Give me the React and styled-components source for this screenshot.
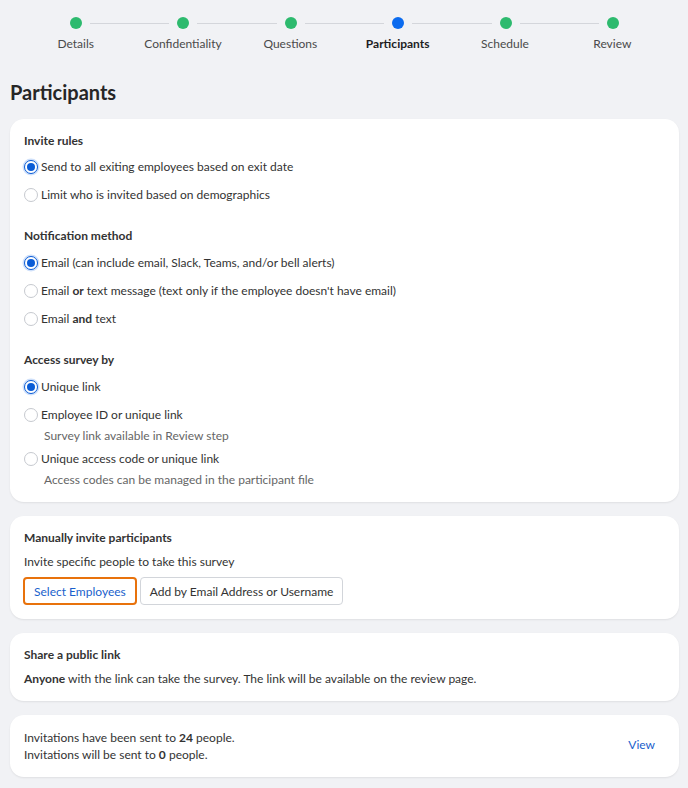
import React from 'react';
import styled, { createGlobalStyle } from 'styled-components';

const GlobalStyle = createGlobalStyle`
  html, body {
    margin: 0;
    padding: 0;
    background: #f1f2f5;
    font-family: Lato, "Liberation Sans", sans-serif;
    color: #333;
  }
`;

const Page = styled.div`
  padding: 0 9px 10px 10px;
`;

const Stepper = styled.div`
  padding-top: 17px;
  margin-left: 12px;
  width: 644px;
`;

const DotRow = styled.div`
  display: flex;
  align-items: center;
  padding: 0 47px 0 48px;
`;

const Dot = styled.div`
  width: 12px;
  height: 12px;
  border-radius: 50%;
  background: ${p => (p.$active ? '#0b6bef' : '#2dba6e')};
  flex: none;
`;

const Connector = styled.div`
  flex: 1;
  height: 1px;
  margin: 0 8px;
  background: #d4d6db;
`;

const Labels = styled.div`
  display: grid;
  grid-template-columns: repeat(6, 1fr);
  margin-top: 7px;
`;

const StepLabel = styled.div`
  text-align: center;
  font-size: 12px;
  color: ${p => (p.$active ? '#1d1d1f' : '#4a4a4a')};
  font-weight: ${p => (p.$active ? 700 : 400)};
`;

const Title = styled.h1`
  margin: 29px 0 0;
  font-size: 20px;
  font-weight: 700;
  color: #262626;
  line-height: 24px;
`;

const Card = styled.div`
  background: #fff;
  border-radius: 14px;
  box-shadow: 0 1px 2px rgba(0, 0, 0, 0.08);
  padding: ${p => p.$pad || '14px'};
  margin-top: ${p => p.$mt || '14px'};
  display: ${p => (p.$row ? 'flex' : 'block')};
  align-items: center;
  justify-content: space-between;
`;

const Section = styled.div`
  & + & {
    margin-top: 25px;
  }
`;

const SectionTitle = styled.div`
  font-size: 12px;
  font-weight: 700;
  color: #333;
  line-height: 16px;
  margin-bottom: ${p => p.$mb || '11px'};
`;

const Option = styled.label`
  display: flex;
  align-items: center;
  gap: 3px;
  font-size: 12px;
  color: #333;
  line-height: 16px;
  & + & {
    margin-top: 12px;
  }
`;

const Radio = styled.span`
  width: 14px;
  height: 14px;
  box-sizing: border-box;
  border-radius: 50%;
  flex: none;
  border: 1px solid ${p => (p.$checked ? '#0a5cd6' : '#c6c9cf')};
  background: #fff;
  display: flex;
  align-items: center;
  justify-content: center;
  box-shadow: ${p => (p.$checked ? '0 0 0 1.5px #cfe0fa' : 'none')};
  &::after {
    content: '';
    width: 8px;
    height: 8px;
    border-radius: 50%;
    background: ${p => (p.$checked ? '#0a5cd6' : 'transparent')};
  }
`;

const Help = styled.div`
  font-size: 12px;
  color: #666;
  line-height: 16px;
  padding-left: 20px;
  margin-top: 5px;
  & + ${Option} {
    margin-top: 7px;
  }
`;

const Text = styled.div`
  font-size: 12px;
  color: #333;
  line-height: 17px;
`;

const Buttons = styled.div`
  display: flex;
  gap: 3px;
  margin-top: 7px;
  margin-left: -1px;
`;

const Button = styled.button`
  font-family: inherit;
  font-size: 12px;
  height: 28px;
  padding: 0 9px;
  border-radius: 4px;
  background: #fff;
  cursor: pointer;
  color: ${p => (p.$primary ? '#1a5fcc' : '#333')};
  border: ${p => (p.$focus ? '2px solid #e8720c' : '1px solid #d2d5da')};
`;

const Link = styled.a`
  font-size: 12px;
  color: #1a5fcc;
  margin: 0 24px 4px 0;
`;

const steps = ['Details', 'Confidentiality', 'Questions', 'Participants', 'Schedule', 'Review'];

function RadioOption({ checked, children }) {
  return (
    <Option>
      <Radio $checked={checked} />
      <span>{children}</span>
    </Option>
  );
}

export default function App() {
  return (
    <Page>
      <GlobalStyle />
      <Stepper>
        <DotRow>
          {steps.map((s, i) => (
            <React.Fragment key={s}>
              {i > 0 && <Connector />}
              <Dot $active={i === 3} />
            </React.Fragment>
          ))}
        </DotRow>
        <Labels>
          {steps.map((s, i) => (
            <StepLabel key={s} $active={i === 3}>{s}</StepLabel>
          ))}
        </Labels>
      </Stepper>

      <Title>Participants</Title>

      <Card $mt="15px">
        <Section>
          <SectionTitle $mb="10px">Invite rules</SectionTitle>
          <RadioOption checked>Send to all exiting employees based on exit date</RadioOption>
          <RadioOption>Limit who is invited based on demographics</RadioOption>
        </Section>
        <Section>
          <SectionTitle>Notification method</SectionTitle>
          <RadioOption checked>Email (can include email, Slack, Teams, and/or bell alerts)</RadioOption>
          <RadioOption>Email <b>or</b> text message (text only if the employee doesn't have email)</RadioOption>
          <RadioOption>Email <b>and</b> text</RadioOption>
        </Section>
        <Section>
          <SectionTitle>Access survey by</SectionTitle>
          <RadioOption checked>Unique link</RadioOption>
          <RadioOption>Employee ID or unique link</RadioOption>
          <Help>Survey link available in Review step</Help>
          <RadioOption>Unique access code or unique link</RadioOption>
          <Help>Access codes can be managed in the participant file</Help>
        </Section>
      </Card>

      <Card>
        <SectionTitle $mb="7px">Manually invite participants</SectionTitle>
        <Text>Invite specific people to take this survey</Text>
        <Buttons>
          <Button $primary $focus>Select Employees</Button>
          <Button>Add by Email Address or Username</Button>
        </Buttons>
      </Card>

      <Card>
        <SectionTitle $mb="7px">Share a public link</SectionTitle>
        <Text><b>Anyone</b> with the link can take the survey. The link will be available on the review page.</Text>
      </Card>

      <Card $row $pad="14px 0 14px 14px">
        <div>
          <Text>Invitations have been sent to <b>24</b> people.</Text>
          <Text>Invitations will be sent to <b>0</b> people.</Text>
        </div>
        <Link>View</Link>
      </Card>
    </Page>
  );
}
